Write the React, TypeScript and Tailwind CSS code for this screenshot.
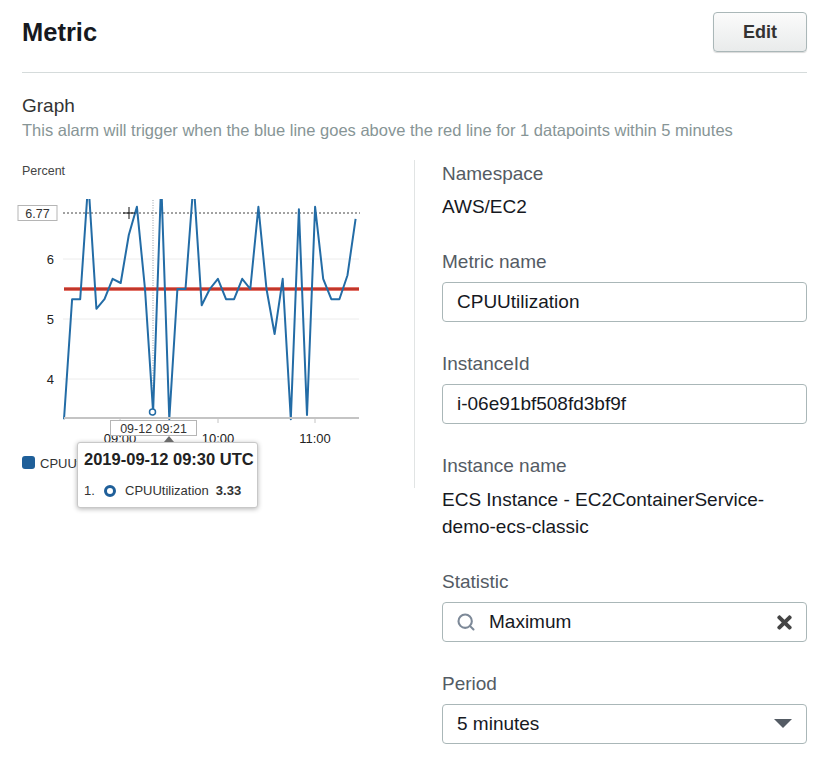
import { Search } from 'lucide-react';
import { FaTimes } from 'react-icons/fa';

const font = { fontFamily: '"Liberation Sans", Arial, sans-serif' };

// CPUUtilization samples, 5 minute spacing
const samples = [
  3.33, 5.33, 5.33, 7.3, 5.17, 5.33, 5.67, 5.6, 6.4, 6.87, 5.5, 3.45, 7.3, 3.33, 5.5, 5.5, 7.3, 5.23, 5.5,
  5.67, 5.33, 5.33, 5.67, 5.5, 6.87, 5.5, 4.75, 5.67, 3.33, 6.83, 3.4, 6.87, 5.67, 5.33, 5.33, 5.73, 6.67,
];

const px = (i: number) => 64 + i * 8.1;
const py = (v: number) => 259 + (6 - v) * 60;

function Chart() {
  const points = samples.map((v, i) => `${px(i).toFixed(1)},${py(v).toFixed(1)}`).join(' ');
  const grid = [6, 5, 4];

  return (
    <svg width={392} height={328} viewBox="14 160 392 328" className="-ml-[8px] block" style={font}>
      <defs>
        <clipPath id="plot">
          <rect x={60} y={199} width={300} height={222} />
        </clipPath>
      </defs>
      <text x={22} y={175} fontSize={12.5} fill="#444">
        Percent
      </text>

      {grid.map((g) => (
        <g key={g}>
          <line x1={63} x2={359} y1={py(g)} y2={py(g)} stroke="#ececec" strokeWidth={1} />
          <text x={54} y={py(g) + 5} fontSize={13} fill="#222" textAnchor="end">
            {g}
          </text>
        </g>
      ))}

      {/* hover guides */}
      <line x1={153} x2={153} y1={200} y2={417} stroke="#9aa0a6" strokeWidth={1} strokeDasharray="1 1.5" />
      <line x1={63} x2={360} y1={213} y2={213} stroke="#444" strokeWidth={1} strokeDasharray="2 2" />
      <rect x={18} y={205.5} width={39} height={15} fill="#fff" stroke="#b5b5b5" />
      <text x={37.5} y={217.5} fontSize={12.5} fill="#333" textAnchor="middle">
        6.77
      </text>

      {/* threshold */}
      <line x1={64} x2={359} y1={289} y2={289} stroke="#d9473a" strokeWidth={3.5} />
      <line x1={64} x2={359} y1={289} y2={289} stroke="#a8281c" strokeWidth={1.2} />

      <polyline
        points={points}
        fill="none"
        stroke="#236ca6"
        strokeWidth={2}
        strokeLinejoin="round"
        clipPath="url(#plot)"
      />
      <circle cx={152.5} cy={py(3.45)} r={3} fill="#fff" stroke="#236ca6" strokeWidth={1.5} />

      {/* cursor */}
      <line x1={123} x2={135} y1={213} y2={213} stroke="#111" strokeWidth={1} />
      <line x1={129} x2={129} y1={207} y2={219} stroke="#111" strokeWidth={1} />

      {/* x axis */}
      <line x1={64} x2={359} y1={418} y2={418} stroke="#c4c4c4" strokeWidth={2} />
      {[120, 218, 315].map((x) => (
        <line key={x} x1={x} x2={x} y1={418} y2={423} stroke="#c4c4c4" strokeWidth={1} />
      ))}
      <text x={120} y={443} fontSize={13} fill="#222" textAnchor="middle">
        09:00
      </text>
      <text x={218} y={443} fontSize={13} fill="#222" textAnchor="middle">
        10:00
      </text>
      <text x={315} y={443} fontSize={13} fill="#222" textAnchor="middle">
        11:00
      </text>
      <rect x={110.5} y={420.5} width={86} height={15} fill="#fff" stroke="#b5b5b5" />
      <text x={153.5} y={432.5} fontSize={12.5} fill="#333" textAnchor="middle">
        09-12 09:21
      </text>

      {/* legend */}
      <rect x={22} y={456} width={13} height={13} rx={3} fill="#1f5f99" />
      <text x={40} y={468} fontSize={13} fill="#333">
        CPUUtilization
      </text>
    </svg>
  );
}

function Tooltip() {
  return (
    <div className="absolute left-[55px] top-[282px] w-[181px] h-[66px] bg-white border border-[#c8c8c8] rounded-[3px] shadow-[0_1px_5px_rgba(0,0,0,0.3)] px-[6px]">
      <div className="absolute -top-[7px] left-[86px] w-0 h-0 border-l-[5px] border-r-[5px] border-b-[6px] border-l-transparent border-r-transparent border-b-[#6b6b6b]" />
      <div className="whitespace-nowrap text-[16.5px] font-bold text-[#222] leading-[20px] mt-[6px]">
        2019-09-12 09:30 UTC
      </div>
      <div className="flex items-center mt-[14px] text-[13px] text-[#333] leading-[16px] whitespace-nowrap">
        <span className="w-[20px]">1.</span>
        <span className="w-[12px] h-[12px] rounded-full border-[3px] border-[#1f5f99]" />
        <span className="ml-[9px]">CPUUtilization</span>
        <span className="ml-[7px] font-bold">3.33</span>
      </div>
    </div>
  );
}

function Field({ label, children }: { label: string; children: React.ReactNode }) {
  return (
    <div className="flex flex-col gap-[8px]">
      <div className="text-[19px] leading-[24px] text-[#545b64]">{label}</div>
      {children}
    </div>
  );
}

function Box({ children }: { children: React.ReactNode }) {
  return (
    <div className="h-[40px] flex items-center border border-[#aab7b8] rounded-[4px] bg-white px-[14px] text-[19px] text-[#16191f]">
      {children}
    </div>
  );
}

export default function App() {
  return (
    <div className="w-[822px] min-h-[758px] bg-white pl-[22px] pr-[15px] pt-[12px]" style={font}>
      <div className="flex items-center justify-between">
        <h1 className="text-[25.5px] font-bold text-[#16191f] leading-[40px]">Metric</h1>
        <button className="w-[94px] h-[40px] rounded-[4px] border border-[#aab7b8] bg-gradient-to-b from-[#fbfbfb] to-[#e9ebeb] shadow-[0_1px_1px_rgba(0,0,0,0.15)] text-[18px] font-bold text-[#333]">
          Edit
        </button>
      </div>
      <div className="mt-[20px] border-t border-[#d5dbdb]" />

      <div className="mt-[22px] text-[19px] leading-[22px] text-[#333]">Graph</div>
      <div className="mt-[3px] text-[16.5px] leading-[20px] text-[#879596]">
        This alarm will trigger when the blue line goes above the red line for 1 datapoints within 5 minutes
      </div>

      <div className="mt-[20px] flex items-start">
        <div className="relative w-[393px] h-[328px] border-r border-[#e1e4e4]">
          <Chart />
          <Tooltip />
        </div>

        <div className="ml-[27px] flex-1 pt-[2px] flex flex-col gap-[30px]">
          <Field label="Namespace">
            <div className="text-[19px] leading-[27px] text-[#16191f] -mt-[1px]">AWS/EC2</div>
          </Field>
          <Field label="Metric name">
            <Box>CPUUtilization</Box>
          </Field>
          <Field label="InstanceId">
            <Box>i-06e91bf508fd3bf9f</Box>
          </Field>
          <Field label="Instance name">
            <div className="text-[19px] leading-[27px] text-[#16191f]">
              ECS Instance - EC2ContainerService-
              <br />
              demo-ecs-classic
            </div>
          </Field>
          <Field label="Statistic">
            <Box>
              <Search size={20} strokeWidth={2.5} className="text-[#7d8998] -ml-[1px]" />
              <span className="ml-[13px] flex-1">Maximum</span>
              <FaTimes size={21} className="text-[#444] -mr-[3px]" />
            </Box>
          </Field>
          <Field label="Period">
            <Box>
              <span className="flex-1">5 minutes</span>
              <svg width={18} height={10} viewBox="0 0 18 10">
                <polygon points="0,0 18,0 9,9" fill="#545b64" />
              </svg>
            </Box>
          </Field>
        </div>
      </div>
    </div>
  );
}
